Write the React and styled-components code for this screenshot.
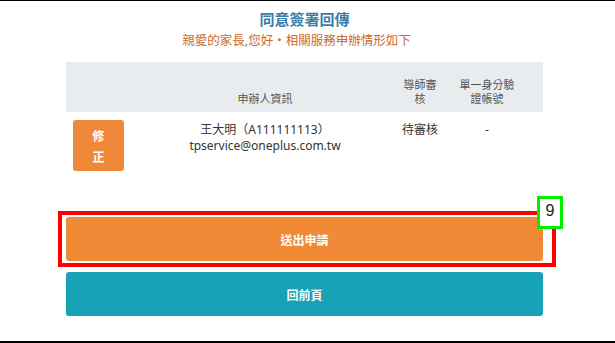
import styled, { createGlobalStyle } from "styled-components";

const GlobalStyle = createGlobalStyle`
  html, body {
    margin: 0;
    padding: 0;
    background: #fff;
  }
  body {
    font-family: "Noto Sans", "Noto Sans CJK TC", sans-serif;
    color: #333;
  }
`;

const Page = styled.div`
  width: 615px;
  height: 343px;
  box-sizing: border-box;
  border-top: 1px solid #000;
  border-bottom: 2px solid #000;
  padding: 0 72px 0 66px;
  position: relative;
  overflow: hidden;
`;

const Title = styled.h1`
  margin: 0;
  padding-top: 7px;
  height: 22px;
  line-height: 22px;
  text-align: center;
  font-size: 15px;
  font-weight: 700;
  color: #3a7ea8;
`;

const Subtitle = styled.p`
  margin: 0;
  padding-right: 16px;
  height: 22px;
  line-height: 22px;
  text-align: center;
  font-size: 12.5px;
  color: #c86c2c;
`;

const Table = styled.div`
  margin-top: 10px;
  display: grid;
  grid-template-columns: 70px 258px 52px 97px;
`;

const HeadCell = styled.div`
  background: #e9ecef;
  height: 50px;
  box-sizing: border-box;
  padding-bottom: 6px;
  display: flex;
  align-items: flex-end;
  justify-content: center;
  text-align: center;
  font-size: 11px;
  line-height: 14px;
  color: #555;
  padding-right: ${(p) => (p.$shift ? "15px" : "0")};
`;

const Cell = styled.div`
  padding-top: ${(p) => (p.$top ? "8px" : "10px")};
  padding-right: ${(p) => (p.$shift ? "15px" : "0")};
  padding-left: ${(p) => (p.$top ? "7px" : "0")};
  height: 66px;
  box-sizing: border-box;
  text-align: center;
  font-size: 12px;
  line-height: 16px;
  color: #333;
  display: flex;
  flex-direction: column;
  align-items: ${(p) => (p.$top ? "flex-start" : "center")};
`;

const EditButton = styled.button`
  width: 51px;
  height: 51px;
  border: none;
  border-radius: 3px;
  background: #f0883a;
  color: #fff;
  font-family: "Noto Sans CJK TC", sans-serif;
  font-weight: 700;
  font-size: 12px;
  line-height: 21px;
  padding: 0;
`;

const Actions = styled.div`
  margin-top: 39px;
  display: flex;
  flex-direction: column;
  gap: 11px;
  position: relative;
`;

const ActionButton = styled.button`
  width: 477px;
  height: 44px;
  border: none;
  border-radius: 3px;
  background: ${(p) => p.$bg};
  color: #fff;
  font-family: "Noto Sans CJK TC", sans-serif;
  font-size: 12px;
  font-weight: 700;
  padding: 0;
`;

const Highlight = styled.div`
  position: absolute;
  left: -8px;
  top: -6px;
  width: 498px;
  height: 56px;
  box-sizing: border-box;
  border: 4px solid #ff0000;
  pointer-events: none;
`;

const Badge = styled.div`
  position: absolute;
  left: 471px;
  top: -21px;
  width: 26px;
  height: 33px;
  box-sizing: border-box;
  border: 3px solid #00ee00;
  background: #fff;
  font-family: "Liberation Sans", sans-serif;
  font-size: 16px;
  font-weight: 400;
  line-height: 24px;
  text-align: center;
  color: #222;
`;

export default function App() {
  return (
    <Page>
      <GlobalStyle />
      <Title>同意簽署回傳</Title>
      <Subtitle>親愛的家長,您好・相關服務申辦情形如下</Subtitle>
      <Table>
        <HeadCell />
        <HeadCell>申辦人資訊</HeadCell>
        <HeadCell>
          導師審
          <br />
          核
        </HeadCell>
        <HeadCell $shift>
          單一身分驗
          <br />
          證帳號
        </HeadCell>
        <Cell $top>
          <EditButton>
            修
            <br />
            正
          </EditButton>
        </Cell>
        <Cell>
          <span>王大明（A111111113）</span>
          <span>tpservice@oneplus.com.tw</span>
        </Cell>
        <Cell>待審核</Cell>
        <Cell $shift>-</Cell>
      </Table>
      <Actions>
        <ActionButton $bg="#f08a36">送出申請</ActionButton>
        <ActionButton $bg="#17a2b8">回前頁</ActionButton>
        <Highlight />
        <Badge>9</Badge>
      </Actions>
    </Page>
  );
}
